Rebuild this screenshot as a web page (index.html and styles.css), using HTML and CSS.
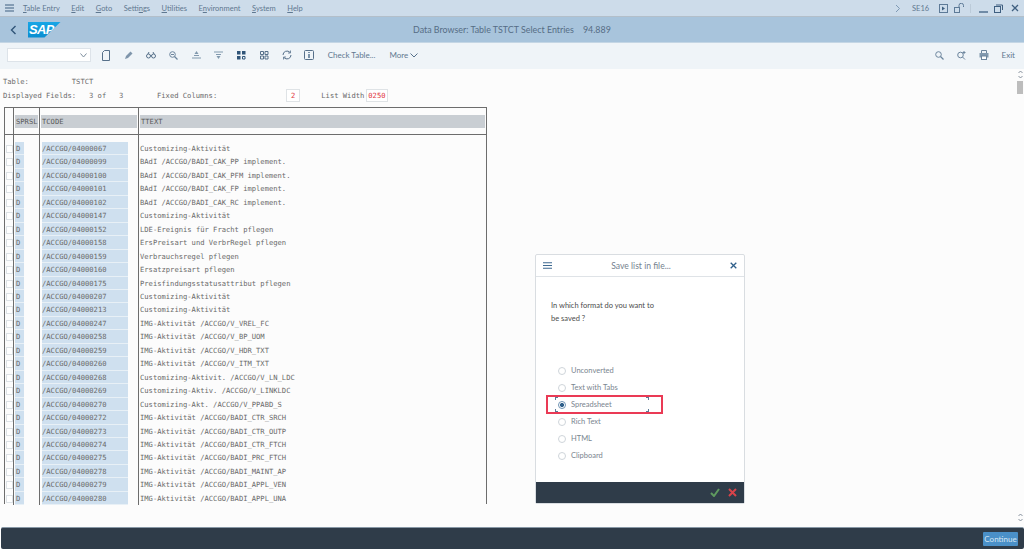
FILE: index.html
```html
<!DOCTYPE html>
<html lang="en">
<head>
    <meta charset="UTF-8">
    <meta name="viewport" content="width=device-width, initial-scale=1.0">
    <title>Data Browser: Table TSTCT Select Entries</title>
    <link rel="stylesheet" href="styles.css">
</head>
<body>
    <div class="menubar">
        <svg class="hamburger" width="10" height="8" viewBox="0 0 10 8"><path d="M0 1h9M0 4h9M0 7h9" stroke="#3f5f80" stroke-width="1.2"/></svg>
        <div class="menu-items">
            <span><u>T</u>able Entry</span>
            <span><u>E</u>dit</span>
            <span><u>G</u>oto</span>
            <span>Setti<u>n</u>gs</span>
            <span><u>U</u>tilities</span>
            <span>E<u>n</u>vironment</span>
            <span><u>S</u>ystem</span>
            <span><u>H</u>elp</span>
        </div>
        <div class="menu-right">
            <svg width="6" height="9" viewBox="0 0 6 9"><path d="M1 1l3.5 3.5L1 8" fill="none" stroke="#7f9ab5" stroke-width="1"/></svg>
            <span class="tcode-label">SE16</span>
            <svg class="play" width="9" height="9" viewBox="0 0 9 9"><rect x=".5" y=".5" width="8" height="8" fill="none" stroke="#5d7a97"/><path d="M3 2.5l3 2-3 2z" fill="#3f5f80"/></svg>
            <svg class="lock" width="11" height="10" viewBox="0 0 11 10"><rect x=".5" y="4.5" width="5" height="5" fill="none" stroke="#5d7a97"/><path d="M5 4V2.5a2 2 0 0 1 4.500 0V4" fill="none" stroke="#5d7a97"/></svg>
            <span class="menu-sep"></span>
            <svg class="win-min" width="9" height="9" viewBox="0 0 9 9"><path d="M0 8h9" stroke="#3f5f80" stroke-width="1.300"/></svg>
            <svg class="win-max" width="9" height="9" viewBox="0 0 9 9"><rect x=".5" y="2.500" width="6" height="6" fill="none" stroke="#3f5f80"/><path d="M2 1h6.500v5" fill="none" stroke="#3f5f80"/></svg>
            <svg class="win-close" width="8" height="8" viewBox="0 0 8 8"><path d="M1 1l6 6M7 1L1 7" stroke="#3f5f80" stroke-width="1.300"/></svg>
        </div>
    </div>

    <div class="titlebar">
        <svg class="back" width="7" height="10" viewBox="0 0 7 10"><path d="M5.500 1L1.500 5l4 4" fill="none" stroke="#2f5478" stroke-width="1.400"/></svg>
        <div class="sap-logo"><span>SAP</span></div>
        <div class="title">Data Browser: Table TSTCT Select Entries &nbsp;&nbsp; 94.889</div>
    </div>

    <div class="toolbar">
        <div class="cmd-field">
            <svg width="7" height="5" viewBox="0 0 7 5"><path d="M.5 .5L3.500 4l3-3.500" fill="none" stroke="#7f8f9f"/></svg>
        </div>
        <div class="tool-icons">
            <svg width="8" height="11" viewBox="0 0 8 11"><path d="M2.500 .5h5v10h-7v-8z" fill="none" stroke="#56708a"/></svg>
            <svg width="9" height="9" viewBox="0 0 9 9"><path d="M1 8l1-3 4.500-4.500 2 2L4 7z" fill="#7f95ab"/></svg>
            <svg width="10" height="8" viewBox="0 0 10 8"><circle cx="2.500" cy="5" r="2" fill="none" stroke="#56708a"/><circle cx="7.500" cy="5" r="2" fill="none" stroke="#56708a"/><path d="M2 3l1-2M8 3L7 1M4.500 4.500h1" stroke="#56708a"/></svg>
            <svg width="9" height="9" viewBox="0 0 9 9"><circle cx="3.500" cy="3.500" r="2.800" fill="none" stroke="#6c859d"/><path d="M5.500 5.500L8.500 8.500" stroke="#6c859d" stroke-width="1.200"/><path d="M2 3.500h3" stroke="#6c859d"/></svg>
            <svg width="9" height="8" viewBox="0 0 9 8"><path d="M4.500 0L6.500 3h-4z" fill="#8299ae"/><path d="M2 4.500h5M0 7h9" stroke="#8299ae" stroke-width="1.200"/></svg>
            <svg width="9" height="8" viewBox="0 0 9 8"><path d="M0 1h9M2 3.500h5" stroke="#8299ae" stroke-width="1.200"/><path d="M4.500 8L6.500 5h-4z" fill="#8299ae"/></svg>
            <svg width="9" height="9" viewBox="0 0 9 9"><path d="M0 0h3.500v3.500H0zM5 0h3.500v3.500H5zM0 5h3.500v3.500H0z" fill="#2f5478"/><path d="M5.500 5.500h2.500v2.500H5.500z" fill="none" stroke="#2f5478"/></svg>
            <svg width="9" height="9" viewBox="0 0 9 9"><path d="M.5 .5h3v3h-3zM5 .5h3v3H5zM.5 5h3v3h-3zM5 5h3v3H5z" fill="none" stroke="#56708a"/></svg>
            <svg width="10" height="10" viewBox="0 0 10 10"><path d="M1 5a4 4 0 0 1 7-2.600M9 5a4 4 0 0 1-7 2.600" fill="none" stroke="#56708a"/><path d="M8.500 .5v2.500H6M1.500 9.500V7H4" fill="none" stroke="#56708a" stroke-width=".8"/></svg>
            <svg width="10" height="10" viewBox="0 0 10 10"><rect x=".5" y=".5" width="9" height="9" rx="1" fill="none" stroke="#56708a"/><path d="M5 2v1M5 4v4" stroke="#2f5478" stroke-width="1.200"/></svg>
        </div>
        <span class="tool-text check">Check Table...</span>
        <span class="tool-text more">More
            <svg width="8" height="5" viewBox="0 0 8 5"><path d="M.5 .5L4 4 7.500 .5" fill="none" stroke="#56708a"/></svg>
        </span>
        <div class="tool-right">
            <svg width="9" height="9" viewBox="0 0 9 9"><circle cx="3.500" cy="3.500" r="2.800" fill="none" stroke="#6c859d"/><path d="M5.500 5.500L8.500 8.500" stroke="#6c859d" stroke-width="1.200"/></svg>
            <svg width="9" height="9" viewBox="0 0 9 9"><circle cx="3.500" cy="4" r="2.800" fill="none" stroke="#6c859d"/><path d="M5.500 6l2.500 2.500M7 0v3M5.500 1.500h3" stroke="#6c859d"/></svg>
            <svg width="10" height="10" viewBox="0 0 10 10"><path d="M2.500 3V.5h5V3" fill="none" stroke="#6c859d"/><rect x=".5" y="3" width="9" height="4.500" fill="#8299ae"/><rect x="2.500" y="6" width="5" height="3.500" fill="#fff" stroke="#6c859d"/></svg>
            <span class="tool-text">Exit</span>
        </div>
    </div>

    <div class="content">
        <div class="list">
            <div class="list-info">
                <div>Table:&nbsp;&nbsp;&nbsp;&nbsp;&nbsp;&nbsp;&nbsp;&nbsp;&nbsp;&nbsp;TSTCT</div>
                <div class="info-row">
                    <span class="info-fields">Displayed Fields:&nbsp;&nbsp;&nbsp;3 of&nbsp;&nbsp;&nbsp;3</span>
                    <span class="info-fixed">Fixed Columns:</span>
                    <span class="red-box box-fixed">2</span>
                    <span class="info-width">List Width</span>
                    <span class="red-box">0250</span>
                </div>
            </div>
            <div class="grid">
                <div class="grid-head">
                    <div class="col-mark"></div>
                    <div class="col-lang"><span class="head-cell">SPRSL</span></div>
                    <div class="col-code"><span class="head-cell">TCODE</span></div>
                    <div class="col-text"><span class="head-cell">TTEXT</span></div>
                </div>
                <div class="grid-body">
                    <div class="col-mark"><i></i><i></i><i></i><i></i><i></i><i></i><i></i><i></i><i></i><i></i><i></i><i></i><i></i><i></i><i></i><i></i><i></i><i></i><i></i><i></i><i></i><i></i><i></i><i></i><i></i><i></i><i></i></div>
                    <div class="col-lang">
                        <b>D</b><b>D</b><b>D</b><b>D</b><b>D</b><b>D</b><b>D</b><b>D</b><b>D</b>
                        <b>D</b><b>D</b><b>D</b><b>D</b><b>D</b><b>D</b><b>D</b><b>D</b><b>D</b>
                        <b>D</b><b>D</b><b>D</b><b>D</b><b>D</b><b>D</b><b>D</b><b>D</b><b>D</b>
                    </div>
                    <div class="col-code">
                        <b>/ACCGO/04000067</b><b>/ACCGO/04000099</b><b>/ACCGO/04000100</b>
                        <b>/ACCGO/04000101</b><b>/ACCGO/04000102</b><b>/ACCGO/04000147</b>
                        <b>/ACCGO/04000152</b><b>/ACCGO/04000158</b><b>/ACCGO/04000159</b>
                        <b>/ACCGO/04000160</b><b>/ACCGO/04000175</b><b>/ACCGO/04000207</b>
                        <b>/ACCGO/04000213</b><b>/ACCGO/04000247</b><b>/ACCGO/04000258</b>
                        <b>/ACCGO/04000259</b><b>/ACCGO/04000260</b><b>/ACCGO/04000268</b>
                        <b>/ACCGO/04000269</b><b>/ACCGO/04000270</b><b>/ACCGO/04000272</b>
                        <b>/ACCGO/04000273</b><b>/ACCGO/04000274</b><b>/ACCGO/04000275</b>
                        <b>/ACCGO/04000278</b><b>/ACCGO/04000279</b><b>/ACCGO/04000280</b>
                    </div>
                    <div class="col-text">
                        <div>Customizing-Aktivität</div>
                        <div>BAdI /ACCGO/BADI_CAK_PP implement.</div>
                        <div>BAdI /ACCGO/BADI_CAK_PFM implement.</div>
                        <div>BAdI /ACCGO/BADI_CAK_FP implement.</div>
                        <div>BAdI /ACCGO/BADI_CAK_RC implement.</div>
                        <div>Customizing-Aktivität</div>
                        <div>LDE-Ereignis für Fracht pflegen</div>
                        <div>ErsPreisart und VerbrRegel pflegen</div>
                        <div>Verbrauchsregel pflegen</div>
                        <div>Ersatzpreisart pflegen</div>
                        <div>Preisfindungsstatusattribut pflegen</div>
                        <div>Customizing-Aktivität</div>
                        <div>Customizing-Aktivität</div>
                        <div>IMG-Aktivität /ACCGO/V_VREL_FC</div>
                        <div>IMG-Aktivität /ACCGO/V_BP_UOM</div>
                        <div>IMG-Aktivität /ACCGO/V_HDR_TXT</div>
                        <div>IMG-Aktivität /ACCGO/V_ITM_TXT</div>
                        <div>Customizing-Aktivit. /ACCGO/V_LN_LDC</div>
                        <div>Customizing-Aktiv. /ACCGO/V_LINKLDC</div>
                        <div>Customizing-Akt. /ACCGO/V_PPABD_S</div>
                        <div>IMG-Aktivität /ACCGO/BADI_CTR_SRCH</div>
                        <div>IMG-Aktivität /ACCGO/BADI_CTR_OUTP</div>
                        <div>IMG-Aktivität /ACCGO/BADI_CTR_FTCH</div>
                        <div>IMG-Aktivität /ACCGO/BADI_PRC_FTCH</div>
                        <div>IMG-Aktivität /ACCGO/BADI_MAINT_AP</div>
                        <div>IMG-Aktivität /ACCGO/BADI_APPL_VEN</div>
                        <div>IMG-Aktivität /ACCGO/BADI_APPL_UNA</div>
                    </div>
                </div>
            </div>
        </div>
        <div class="scrollbar">
            <svg class="arrows" width="5" height="9" viewBox="0 0 5 9"><path d="M.5 3L2.500 1l2 2M.5 6l2 2 2-2" fill="none" stroke="#6c7a88" stroke-width=".8"/></svg>
            <div class="thumb"></div>
            <svg class="arrows arrows-end" width="5" height="9" viewBox="0 0 5 9"><path d="M.5 3L2.500 1l2 2M.5 6l2 2 2-2" fill="none" stroke="#6c7a88" stroke-width=".8"/></svg>
        </div>
    </div>

    <div class="statusbar">
        <button class="btn-continue">Continue</button>
    </div>

    <div class="dialog">
        <div class="dialog-head">
            <svg width="9" height="7" viewBox="0 0 9 7"><path d="M0 .7h9M0 3.500h9M0 6.300h9" stroke="#3f6a91" stroke-width="1.100"/></svg>
            <span class="dialog-title">Save list in file...</span>
            <svg width="7" height="7" viewBox="0 0 7 7"><path d="M.7 .7l5.600 5.600M6.300 .7L.7 6.300" stroke="#2f5f8a" stroke-width="1.300"/></svg>
        </div>
        <div class="dialog-body">
            <p class="question">In which format do you want to<br>be saved ?</p>
            <div class="options">
                <div class="option"><span class="radio"></span>Unconverted</div>
                <div class="option"><span class="radio"></span>Text with Tabs</div>
                <div class="option option-on"><span class="radio radio-on"></span>Spreadsheet<span class="focus-marks"></span></div>
                <div class="option"><span class="radio"></span>Rich Text</div>
                <div class="option"><span class="radio"></span>HTML</div>
                <div class="option"><span class="radio"></span>Clipboard</div>
            </div>
        </div>
        <div class="dialog-foot">
            <svg width="10" height="9" viewBox="0 0 10 9"><path d="M1 5l3 3 5-7" fill="none" stroke="#5f9a5f" stroke-width="2"/></svg>
            <svg width="9" height="9" viewBox="0 0 9 9"><path d="M1 1l7 7M8 1L1 8" stroke="#d8434a" stroke-width="2"/></svg>
        </div>
    </div>
</body>
</html>
```

FILE: styles.css
```css
html, body {
    height: 100%;
}
body {
    font-family: 'Lato', 'Open Sans', sans-serif;
    display: flex;
    flex-direction: column;
    height: 554px;
    margin: 0;
    background-color: #ffffff;
    color: #5a6f84;
    overflow: hidden;
}
u {
    text-underline-offset: 1px;
}
svg {
    display: block;
    flex: none;
}

/* top menu */
.menubar {
    display: flex;
    align-items: center;
    height: 16px;
    background-color: #cddcea;
    border-bottom: 1px solid #b3bfca;
    padding: 0 5px;
    font-size: 7.5px;
    color: #5f7890;
}
.menu-items {
    display: flex;
    gap: 11.5px;
    margin-left: 8px;
}
.menu-right {
    display: flex;
    align-items: center;
    margin-left: auto;
}
.tcode-label {
    width: 17px;
    margin-left: 11px;
    color: #5f7890;
}
.play {
    margin-left: 10px;
}
.lock {
    margin-left: 6px;
}
.menu-sep {
    width: 1px;
    height: 9px;
    background-color: #bccbd9;
    margin-left: 5px;
}
.win-min {
    margin-left: 8px;
}
.win-max {
    margin-left: 6px;
}
.win-close {
    margin-left: 8px;
}

/* title bar */
.titlebar {
    display: flex;
    align-items: center;
    position: relative;
    height: 25px;
    background-color: #a8c4dc;
    border-bottom: 1px solid #c4d6e5;
    padding-left: 10px;
}
.sap-logo {
    width: 33px;
    height: 16px;
    margin-left: 11px;
    background: linear-gradient(#17a6e6, #0a8ccf);
    clip-path: polygon(0 0, 100% 0, 50% 100%, 0 100%);
    color: #fff;
    font: italic bold 13px/16px 'Liberation Sans', sans-serif;
    letter-spacing: -0.6px;
}
.sap-logo span {
    padding-left: 1px;
}
.title {
    position: absolute;
    left: 413px;
    font-size: 8.9px;
    color: #566d85;
}

/* toolbar */
.toolbar {
    display: flex;
    align-items: center;
    box-sizing: border-box;
    height: 26px;
    background-color: #eff4f8;
    padding: 0 0 2px 7px;
    font-size: 8px;
    color: #5f7890;
}
.cmd-field {
    display: flex;
    align-items: center;
    justify-content: flex-end;
    box-sizing: border-box;
    width: 84px;
    height: 14px;
    background-color: #fff;
    border: 1px solid #dde3e9;
    padding-right: 3px;
}
.tool-icons {
    display: grid;
    grid-template-columns: repeat(10, 22.6px);
    justify-items: center;
    align-items: center;
    margin-left: 3.7px;
}
.tool-text {
    white-space: nowrap;
}
.check {
    margin-left: 7px;
}
.more {
    display: flex;
    align-items: center;
    gap: 2px;
    margin-left: 14px;
}
.tool-right {
    display: flex;
    align-items: center;
    gap: 13px;
    margin-left: auto;
    margin-right: 9px;
}

/* list output */
.content {
    display: flex;
    flex: 1;
    min-height: 0;
    background-color: #fcfcfc;
}
.list {
    flex: 1;
    padding: 6px 0 0 3px;
    font-family: 'DejaVu Sans Mono', monospace;
    font-size: 7.15px;
    color: #6a6a6a;
}
.list-info {
    line-height: 13.500px;
}
.info-row {
    display: flex;
    align-items: center;
}
.info-fields {
    width: 154px;
}
.info-fixed {
    width: 129px;
}
.red-box {
    display: inline-block;
    padding: 0 1px;
    line-height: 11px;
    background-color: #fff;
    border: 1px solid #dfe3e6;
    color: #e0353c;
}
.box-fixed {
    padding: 0 4px;
}
.info-width {
    margin: 0 2px 0 21px;
}

.grid {
    box-sizing: border-box;
    width: 483px;
    margin: 5px 0 0 1px;
    border: solid #6d6d6d;
    border-width: 1px 1px 0 1px;
}
.grid-head, .grid-body {
    display: grid;
    grid-template-columns: 8px 26px 99px 1fr;
}
.grid-head {
    height: 26px;
    border-bottom: 1px solid #6d6d6d;
    align-items: stretch;
}
.grid-head > div {
    display: flex;
    align-items: center;
    padding-top: 1px;
}
.col-lang, .col-code, .col-text {
    box-sizing: border-box;
    border-left: 1px solid #6d6d6d;
}
.col-code, .col-text {
    border-left-width: 1.500px;
}
.head-cell {
    display: block;
    flex: 1;
    margin: 0 1px;
    padding-left: 1px;
    line-height: 13px;
    background-color: #c9ced3;
    color: #5a5a5a;
}
.grid-body {
    height: 369px;
}
.grid-body > div {
    padding-top: 7px;
}
.col-mark i, .col-lang b, .col-code b, .col-text div {
    display: block;
    height: 13.46px;
    line-height: 13.46px;
    white-space: nowrap;
    font-weight: normal;
    font-style: normal;
}
.col-mark i {
    position: relative;
}
.col-mark i::before {
    content: "";
    position: absolute;
    left: 1px;
    top: 3px;
    width: 5px;
    height: 6px;
    border: 1px solid #dde2e6;
    background-color: #fff;
}
.col-lang b {
    box-sizing: border-box;
    width: 9px;
    margin-left: 1px;
    padding-left: 1px;
    background-color: #cfe0ef;
    box-shadow: inset 0 -1px 0 #e8f0f6;
}
.col-code b {
    width: 86px;
    margin-left: 2px;
    background-color: #cfe0ef;
    box-shadow: inset 0 -1px 0 #e8f0f6;
}
.col-text div {
    padding-left: 1px;
}

/* scrollbar */
.scrollbar {
    display: flex;
    flex-direction: column;
    align-items: center;
    width: 8px;
    padding-top: 1px;
}
.thumb {
    width: 6px;
    height: 13px;
    margin-top: 2px;
    background-color: #bdbdbd;
}
.arrows-end {
    margin-top: auto;
    margin-bottom: 5px;
}

/* bottom bar */
.statusbar {
    display: flex;
    align-items: center;
    justify-content: flex-end;
    box-sizing: border-box;
    height: 22px;
    margin: 0 0 5px 1px;
    padding-right: 6px;
    background-color: #2f3c49;
    border-top: 1px solid #8898a6;
    border-radius: 2px;
}
.btn-continue {
    width: 35px;
    height: 14px;
    padding: 0;
    border: none;
    border-radius: 1px;
    background-color: #4a90c8;
    color: #d6e6f3;
    font: 8px 'Lato', sans-serif;
}

/* popup window */
.dialog {
    position: absolute;
    left: 535px;
    top: 254px;
    display: flex;
    flex-direction: column;
    box-sizing: border-box;
    width: 210px;
    height: 250px;
    background-color: #fff;
    border: 1px solid #d9dde1;
    border-radius: 2px;
}
.dialog-head {
    display: flex;
    align-items: center;
    justify-content: space-between;
    height: 21px;
    padding: 0 7px;
    border-bottom: 1px solid #dfe3e7;
}
.dialog-title {
    font-size: 8.6px;
    color: #75828f;
}
.dialog-body {
    flex: 1;
    font-size: 7.500px;
}
.question {
    margin: 0;
    padding: 22px 0 0 15px;
    line-height: 13px;
    color: #4c4c4c;
}
.options {
    margin-top: 37px;
    padding-left: 10px;
    color: #7a858f;
}
.option {
    display: flex;
    align-items: center;
    gap: 5px;
    height: 17px;
    position: relative;
}
.option-on::before {
    content: "";
    position: absolute;
    left: 0;
    top: -1px;
    width: 113px;
    height: 15px;
    border: 2px solid #ea3a55;
}
.focus-marks {
    position: absolute;
    left: 9px;
    top: 1px;
    width: 94px;
    height: 15px;
    --c: #5d7a97;
    background:
        linear-gradient(var(--c), var(--c)) 0 0 / 3px 1px,
        linear-gradient(var(--c), var(--c)) 0 0 / 1px 3px,
        linear-gradient(var(--c), var(--c)) 100% 0 / 3px 1px,
        linear-gradient(var(--c), var(--c)) 100% 0 / 1px 3px,
        linear-gradient(var(--c), var(--c)) 0 100% / 3px 1px,
        linear-gradient(var(--c), var(--c)) 0 100% / 1px 3px,
        linear-gradient(var(--c), var(--c)) 100% 100% / 3px 1px,
        linear-gradient(var(--c), var(--c)) 100% 100% / 1px 3px;
    background-repeat: no-repeat;
}
.radio {
    box-sizing: border-box;
    width: 8px;
    height: 8px;
    margin-left: 12px;
    border: 1px solid #cfd5da;
    border-radius: 50%;
    background-color: #fff;
}
.radio-on {
    border-color: #6f93b4;
    background: radial-gradient(circle, #2f5f8a 0 1.800px, #fff 2.300px);
}
.dialog-foot {
    display: flex;
    align-items: center;
    justify-content: flex-end;
    gap: 8px;
    height: 21px;
    padding-right: 7px;
    background-color: #2f3c49;
}
```
